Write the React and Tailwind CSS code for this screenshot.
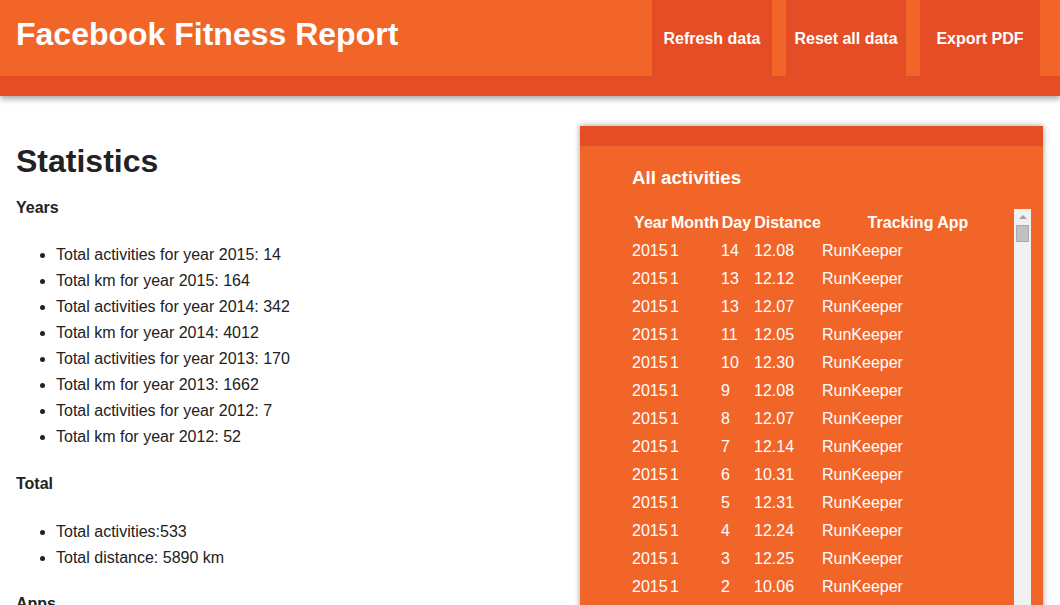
const yearStats = [
  'Total activities for year 2015: 14',
  'Total km for year 2015: 164',
  'Total activities for year 2014: 342',
  'Total km for year 2014: 4012',
  'Total activities for year 2013: 170',
  'Total km for year 2013: 1662',
  'Total activities for year 2012: 7',
  'Total km for year 2012: 52',
];

const totals = ['Total activities:533', 'Total distance: 5890 km'];

const activities = [
  [14, '12.08'],
  [13, '12.12'],
  [13, '12.07'],
  [11, '12.05'],
  [10, '12.30'],
  [9, '12.08'],
  [8, '12.07'],
  [7, '12.14'],
  [6, '10.31'],
  [5, '12.31'],
  [4, '12.24'],
  [3, '12.25'],
  [2, '10.06'],
  [1, '12.11'],
];

const cols = 'grid grid-cols-[38px_50px_33px_69px_1fr] h-[28px] items-center';

const App = () => {
  return (
    <div className="min-h-screen bg-white font-['Liberation_Sans',Arial,sans-serif] text-[#222]">
      {/* Header */}
      <header className="relative z-10 bg-[#E44D26] pb-[20px] shadow-[0_3px_6px_rgba(0,0,0,0.35)]">
        <div className="flex h-[76px] bg-[#F16529]">
          <h1 className="pl-4 pt-[16px] text-[32px] leading-[37px] font-bold text-white">
            Facebook Fitness Report
          </h1>
          <nav className="ml-auto flex gap-[14px] pr-[20px]">
            {['Refresh data', 'Reset all data', 'Export PDF'].map((label) => (
              <button
                key={label}
                className="flex h-[76px] w-[120px] items-center justify-center bg-[#E44D26] pt-[1px] text-[16px] font-bold text-white"
              >
                {label}
              </button>
            ))}
          </nav>
        </div>
      </header>

      <div className="flex">
        {/* Statistics */}
        <div className="flex-1 pl-4">
          <h2 className="mt-[47px] text-[32px] leading-[37px] font-bold">Statistics</h2>
          <h4 className="mt-[19px] text-[16px] leading-[18px] font-bold">Years</h4>
          <ul className="mt-[25px] list-disc pl-[40px] text-[16px] leading-[26px]">
            {yearStats.map((s) => (
              <li key={s}>{s}</li>
            ))}
          </ul>
          <h4 className="mt-[25px] text-[16px] leading-[18px] font-bold">Total</h4>
          <ul className="mt-[26px] list-disc pl-[40px] text-[16px] leading-[26px]">
            {totals.map((s) => (
              <li key={s}>{s}</li>
            ))}
          </ul>
          <h4 className="mt-[24px] text-[16px] leading-[18px] font-bold">Apps</h4>
        </div>

        {/* All activities panel */}
        <div className="mt-[30px] mr-[17px] w-[463px] bg-[#F16529] shadow-[0_0_6px_rgba(0,0,0,0.4)]">
          <div className="h-[20px] bg-[#E44D26]" />
          <div className="pl-[52px] pr-[12px] text-white">
            <h3 className="mt-[21px] text-[18.7px] leading-[22px] font-bold">All activities</h3>
            <div className="mt-[20px] flex">
              <div className="h-[420px] flex-1 overflow-hidden text-[16px]">
                <div className={`${cols} font-bold`}>
                  <span className="text-center">Year</span>
                  <span className="text-center">Month</span>
                  <span className="text-center">Day</span>
                  <span className="text-center">Distance</span>
                  <span className="text-center">Tracking App</span>
                </div>
                {activities.map(([day, dist], i) => (
                  <div key={i} className={cols}>
                    <span>2015</span>
                    <span>1</span>
                    <span className="pl-px">{day}</span>
                    <span className="pl-px">{dist}</span>
                    <span>RunKeeper</span>
                  </div>
                ))}
              </div>
              {/* scrollbar */}
              <div className="flex w-[17px] flex-col items-center bg-[#f1f1f1]">
                <div className="mt-[6px] h-0 w-0 border-x-[4px] border-b-[4px] border-x-transparent border-b-[#a3a3a3]" />
                <div className="mt-[6px] h-[17px] w-[13px] border border-[#a9a9a9] bg-[#c1c1c1]" />
              </div>
            </div>
          </div>
        </div>
      </div>
    </div>
  );
};

export default App;
